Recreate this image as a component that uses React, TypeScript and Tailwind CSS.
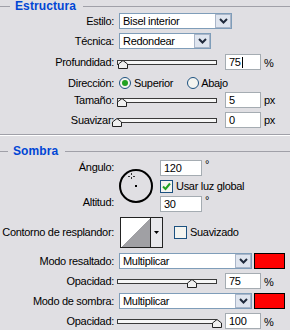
import React from 'react';

const font = { fontFamily: '"Liberation Sans", Arial, sans-serif' };

function Chevron() {
  return (
    <svg width="9" height="6" viewBox="0 0 9 6">
      <path d="M1 1 L4.5 4.5 L8 1" fill="none" stroke="#202a3c" strokeWidth="2" />
    </svg>
  );
}

function Select({ value, className }: { value: string; className: string }) {
  return (
    <div className={`${className} h-[16px] flex border border-[#7f9db9] bg-white`}>
      <span className="flex-1 pl-[3px] leading-[14px] whitespace-nowrap overflow-hidden">{value}</span>
      <span className="w-[16px] h-[14px] flex items-center justify-center bg-[#dfe5ef] border border-[#aab6c9]">
        <Chevron />
      </span>
    </div>
  );
}

function Input({ value, className, caret }: { value: string; className: string; caret?: boolean }) {
  return (
    <div className={`${className} h-[16px] flex items-center border border-[#a5acb2] bg-white pl-[3px]`}>
      <span className="leading-[14px]">{value}</span>
      {caret && <span className="w-px h-[11px] bg-black ml-px" />}
    </div>
  );
}

function Slider({ pct }: { pct: number }) {
  return (
    <div className="relative w-[100px] h-[16px] ml-[3px] flex items-center">
      <div className="w-full h-[5px] border border-[#3a3a3a] bg-[#f6f6f6]" />
      <svg
        className="absolute top-[6px]"
        style={{ left: pct - 5 }}
        width="10"
        height="9"
        viewBox="0 0 10 9"
      >
        <path d="M0.5 8.5 L0.5 4 L5 0.5 L9.5 4 L9.5 8.5 Z" fill="#f0f0f0" stroke="#222" strokeWidth="1" />
      </svg>
    </div>
  );
}

function Radio({ checked }: { checked?: boolean }) {
  return (
    <span className="w-[12px] h-[12px] rounded-full border border-[#1c5180] bg-[#f4f4f0] flex items-center justify-center shrink-0">
      {checked && <span className="w-[6px] h-[6px] rounded-full bg-[#21a121]" />}
    </span>
  );
}

function Checkbox({ checked }: { checked?: boolean }) {
  return (
    <span className="w-[13px] h-[13px] border border-[#1c5180] bg-[#f4f4f0] flex items-center justify-center shrink-0">
      {checked && (
        <svg width="9" height="9" viewBox="0 0 9 9">
          <path d="M1 4.5 L3.5 7 L8 1.5" fill="none" stroke="#21a121" strokeWidth="2" />
        </svg>
      )}
    </span>
  );
}

function Label({ children }: { children: React.ReactNode }) {
  return <span className="w-[114px] shrink-0 text-right whitespace-nowrap">{children}</span>;
}

function Title({ children, lead }: { children: React.ReactNode; lead: string }) {
  return (
    <div className="flex items-center h-[12px]">
      <span className={`${lead} h-px bg-[#a0a0a8]`} />
      <span className="ml-[5px] mr-[7px] font-bold text-[#0046d5] text-[12px] tracking-[0.1px] leading-[12px]">{children}</span>
      <span className="flex-1 h-px bg-[#a0a0a8]" />
    </div>
  );
}

function Dial() {
  return (
    <svg width="34" height="35" viewBox="0 0 34 35" shapeRendering="crispEdges">
      <circle cx="17" cy="17" r="16" fill="none" stroke="#000" strokeWidth="2" shapeRendering="auto" />
      <rect x="16" y="16" width="2" height="2" fill="#000" />
      <path d="M12.5 4 V6 M12.5 8 V10 M9 7.5 H11 M14 7.5 H16" stroke="#333" strokeWidth="1" />
    </svg>
  );
}

function Contour() {
  return (
    <div className="ml-[6px] w-[43px] h-[31px] flex border border-[#222] bg-[#e8e8ec]">
      <svg width="29" height="29" viewBox="0 0 29 29" className="bg-white" shapeRendering="crispEdges">
        <path d="M0 29 L29 0 L29 29 Z" fill="#a0a0a4" />
      </svg>
      <span className="w-px h-full bg-[#222]" />
      <span className="flex-1 flex items-center justify-center">
        <svg width="5" height="3" viewBox="0 0 5 3">
          <path d="M0 0 H5 L2.5 3 Z" fill="#000" />
        </svg>
      </span>
    </div>
  );
}

export default function App() {
  return (
    <div className="w-[290px] h-[330px] overflow-hidden bg-[#e0dfe3] text-[11px] text-black tracking-[-0.3px]" style={font}>
      <Title lead="w-[10px]">Estructura</Title>

      <div className="flex items-center h-[16px] mt-[1px]">
        <Label>Estilo:</Label>
        <div className="ml-[5px]">
          <Select value="Bisel interior" className="w-[113px]" />
        </div>
      </div>

      <div className="flex items-center h-[16px] mt-[4px]">
        <Label>Técnica:</Label>
        <div className="ml-[5px]">
          <Select value="Redondear" className="w-[92px]" />
        </div>
      </div>

      <div className="flex items-center h-[16px] mt-[5px]">
        <Label>Profundidad:</Label>
        <Slider pct={6} />
        <Input value="75" className="w-[36px] ml-[8px]" caret />
        <span className="ml-[3px] self-start mt-[1px]">%</span>
      </div>

      <div className="flex items-center h-[12px] mt-[7px]">
        <Label>Dirección:</Label>
        <span className="ml-[5px]"><Radio checked /></span>
        <span className="ml-[3px]">Superior</span>
        <span className="ml-[14px]"><Radio /></span>
        <span className="ml-[2px]">Abajo</span>
      </div>

      <div className="flex items-center h-[16px] mt-[3px]">
        <Label>Tamaño:</Label>
        <Slider pct={5} />
        <Input value="5" className="w-[36px] ml-[8px]" />
        <span className="ml-[3px]">px</span>
      </div>

      <div className="flex items-center h-[16px] mt-[4px]">
        <Label>Suavizar:</Label>
        <Slider pct={0} />
        <Input value="0" className="w-[36px] ml-[8px]" />
        <span className="ml-[3px]">px</span>
      </div>

      <div className="mt-[6px] h-[2px] border-t border-[#a0a0a8] border-b border-b-white" />

      <div className="mt-[9px]">
        <Title lead="w-[8px]">Sombra</Title>
      </div>

      <div className="flex mt-[3px] h-[52px]">
        <div className="w-[114px] shrink-0 flex flex-col items-end">
          <span className="mt-[1px] leading-[12px]">Ángulo:</span>
          <span className="mt-auto mb-[4px] leading-[12px]">Altitud:</span>
        </div>
        <div className="ml-[5px] pt-[9px]">
          <Dial />
        </div>
        <div className="ml-[7px] flex flex-col">
          <div className="flex">
            <Input value="120" className="w-[42px]" />
            <span className="ml-[3px] leading-[9px]">°</span>
          </div>
          <div className="flex items-center h-[13px] mt-[4px]">
            <Checkbox checked />
            <span className="ml-[3px] whitespace-nowrap">Usar luz global</span>
          </div>
          <div className="flex mt-[3px]">
            <Input value="30" className="w-[42px]" />
            <span className="ml-[3px] leading-[9px]">°</span>
          </div>
        </div>
      </div>

      <div className="flex items-center h-[31px] mt-[5px]">
        <Label>Contorno de resplandor:</Label>
        <Contour />
        <span className="ml-[11px]"><Checkbox /></span>
        <span className="ml-[3px]">Suavizado</span>
      </div>

      <div className="flex items-center h-[16px] mt-[5px]">
        <Label>Modo resaltado:</Label>
        <div className="ml-[5px]">
          <Select value="Multiplicar" className="w-[133px]" />
        </div>
        <span className="ml-[2px] w-[31px] h-[16px] bg-[#ff0000] border border-black" />
      </div>

      <div className="flex items-center h-[16px] mt-[4px]">
        <Label>Opacidad:</Label>
        <Slider pct={75} />
        <Input value="75" className="w-[36px] ml-[8px]" />
        <span className="ml-[3px] self-start mt-[1px]">%</span>
      </div>

      <div className="flex items-center h-[16px] mt-[4px]">
        <Label>Modo de sombra:</Label>
        <div className="ml-[5px]">
          <Select value="Multiplicar" className="w-[133px]" />
        </div>
        <span className="ml-[2px] w-[31px] h-[16px] bg-[#ff0000] border border-black" />
      </div>

      <div className="flex items-center h-[16px] mt-[4px]">
        <Label>Opacidad:</Label>
        <Slider pct={100} />
        <Input value="100" className="w-[36px] ml-[8px]" />
        <span className="ml-[3px] self-start mt-[1px]">%</span>
      </div>
    </div>
  );
}
